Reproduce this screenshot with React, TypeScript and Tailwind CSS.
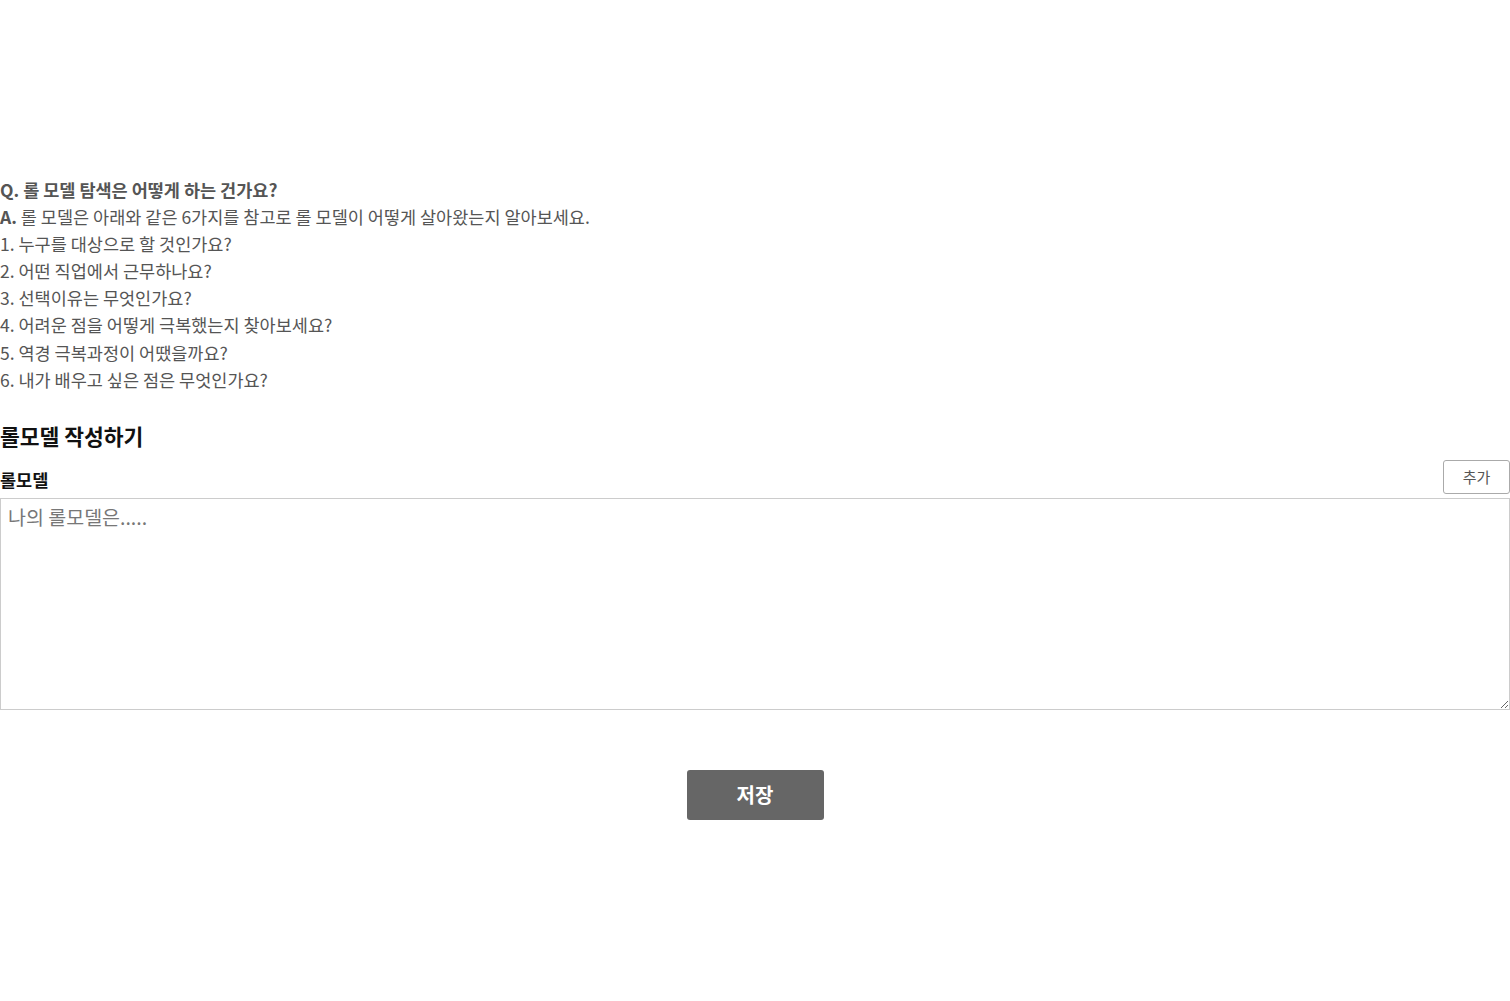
import React from "react";

export default function App() {
  const items = [
    "1. 누구를 대상으로 할 것인가요?",
    "2. 어떤 직업에서 근무하나요?",
    "3. 선택이유는 무엇인가요?",
    "4. 어려운 점을 어떻게 극복했는지 찾아보세요?",
    "5. 역경 극복과정이 어땠을까요?",
    "6. 내가 배우고 싶은 점은 무엇인가요?",
  ];
  return (
    <div
      className="w-[1510px] h-[1001px] bg-white"
      style={{ fontFamily: '"Noto Sans CJK KR", "Noto Sans", sans-serif' }}
    >
      <div className="pt-[176px]">
        <div className="text-[17.5px] leading-[27.1px] text-[#555]">
          <p className="font-bold">Q. 롤 모델 탐색은 어떻게 하는 건가요?</p>
          <p>
            <span className="font-bold">A.</span> 롤 모델은 아래와 같은 6가지를 참고로 롤 모델이 어떻게 살아왔는지 알아보세요.
          </p>
          {items.map((t) => (
            <p key={t}>{t}</p>
          ))}
        </div>
        <h2 className="mt-[28px] text-[21.5px] leading-[30px] font-bold text-[#111]">
          롤모델 작성하기
        </h2>
        <div className="mt-[9px] flex items-end justify-between">
          <span className="text-[17.5px] leading-[24px] font-bold text-[#111] mb-[6px]">롤모델</span>
          <button className="w-[67px] h-[34px] border border-[#aaa] rounded-[3px] text-[15px] text-[#555] bg-white mb-[4px]">
            추가
          </button>
        </div>
        <textarea
          className="block w-full h-[212px] border border-[#ccc] px-[7px] py-[5px] text-[19.5px] leading-[26px] text-[#333] placeholder:text-[#777] resize-y outline-none"
          placeholder="나의 롤모델은....."
        />
        <div className="mt-[60px] flex justify-center">
          <button className="w-[137px] h-[50px] bg-[#666] rounded-[3px] text-white text-[20px] font-bold">
            저장
          </button>
        </div>
      </div>
    </div>
  );
}
